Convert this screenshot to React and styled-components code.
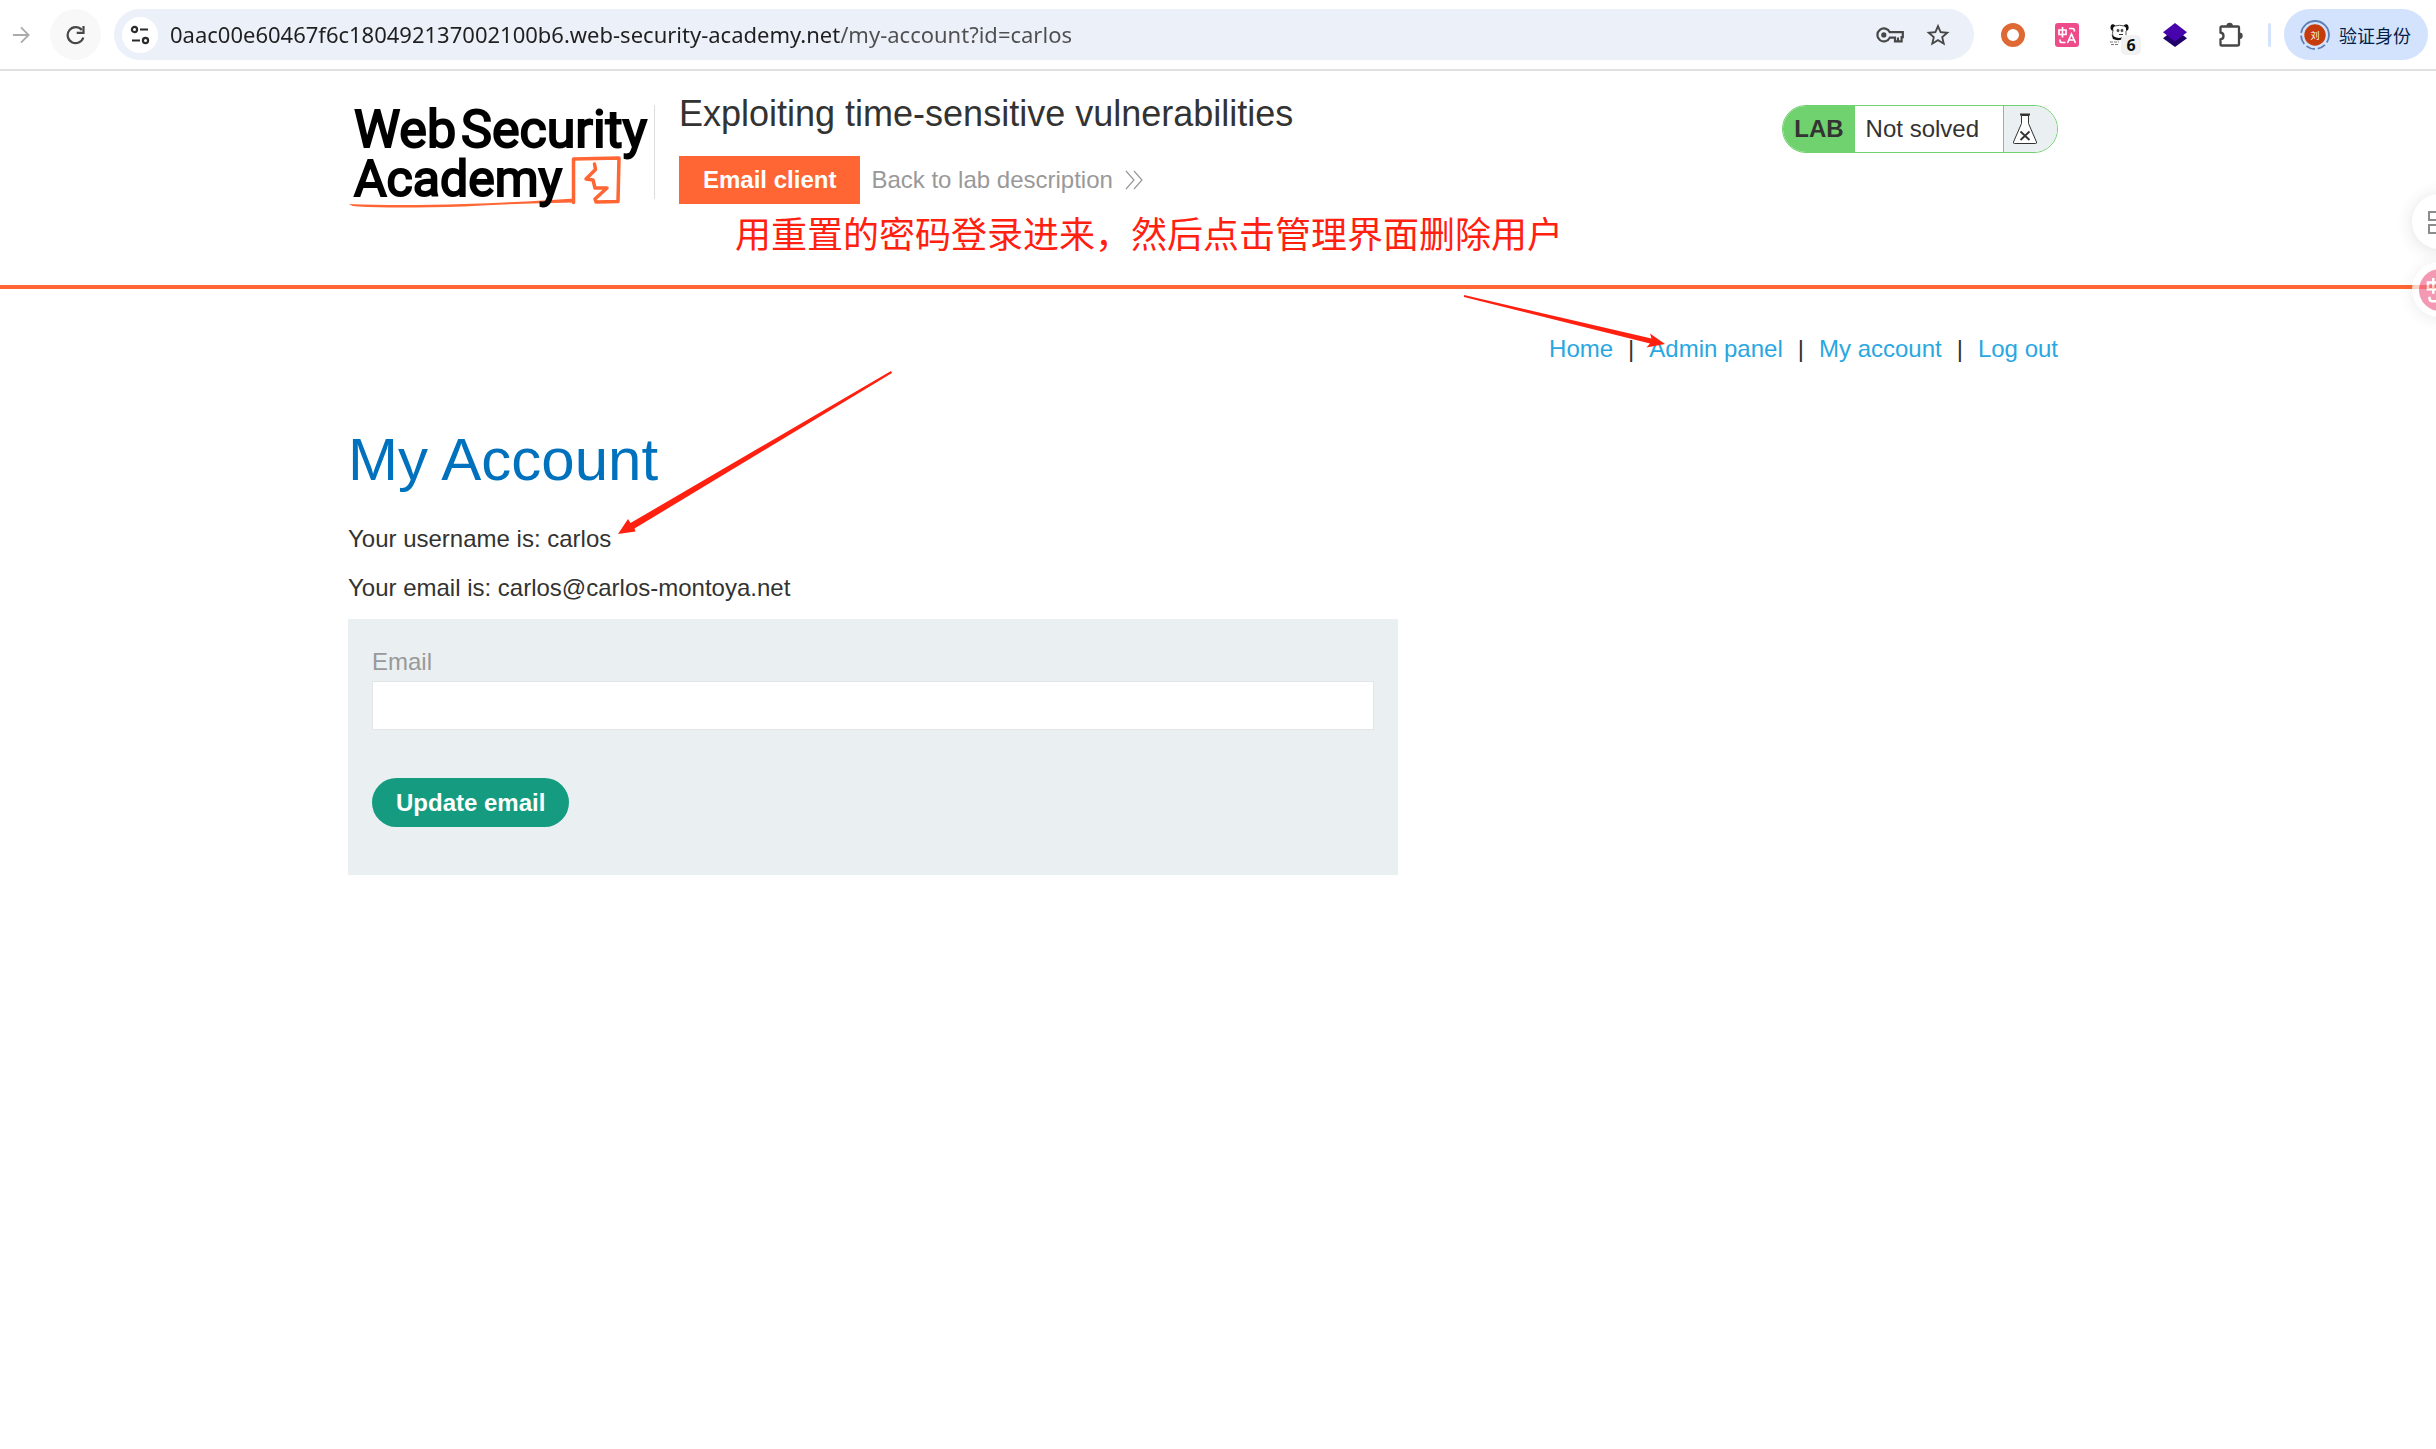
import React from "react";
import styled, { createGlobalStyle } from "styled-components";

const GlobalStyle = createGlobalStyle`
    * {
        box-sizing: border-box;
    }
    body {
        margin: 0;
        background-color: #fff;
        color: #333332;
        font-family: "Liberation Sans", Arial, sans-serif;
        font-size: 24px;
        line-height: 36px;
        overflow-x: hidden;
    }
`;

const Page = styled.div`
    position: relative;
    min-height: 100vh;
    overflow: hidden;
`;

/* ---------- browser toolbar ---------- */

const Toolbar = styled.div`
    display: flex;
    align-items: center;
    padding: 9px 8px 9px 12px;
    border-bottom: 2px solid #e1e1e1;
    background-color: #fff;
`;

const IconButton = styled.button`
    display: flex;
    justify-content: center;
    align-items: center;
    flex-shrink: 0;
    width: ${({ $width }) => $width || 24}px;
    height: ${({ $height }) => $height || 51}px;
    padding: 0;
    border: none;
    border-radius: 50%;
    background-color: ${({ $background }) => $background || "transparent"};
    cursor: pointer;
`;

const AddressBar = styled.form`
    display: flex;
    align-items: center;
    flex: 1;
    gap: 12px;
    height: 51px;
    margin-left: 13px;
    padding: 0 22px 0 8px;
    border-radius: 26px;
    background-color: #ebf0f9;
`;

const AddressInput = styled.input`
    flex: 1;
    min-width: 0;
    height: 34px;
    padding: 0 0 2px;
    border: none;
    outline: none;
    font-family: "Noto Sans", "Open Sans", sans-serif;
    font-size: 22px;
    /* the path is a lighter grey than the host */
    color: transparent;
    background-image: linear-gradient(to right, #1f1f1f 670px, #4f4f4f 670px);
    background-clip: text;
`;

const AddressActions = styled.div`
    display: flex;
    align-items: center;
    gap: 20px;
`;

const Reload = styled(IconButton)`
    margin-left: 20px;
`;

const Extensions = styled.div`
    display: flex;
    margin-left: 12px;
`;

const Extension = styled(IconButton)`
    position: relative;
`;

const Badge = styled.span`
    position: absolute;
    right: 7px;
    bottom: 5px;
    width: 20px;
    height: 20px;
    border-radius: 5px;
    background-color: #f1f1f1;
    color: #111;
    font-family: "Noto Sans", sans-serif;
    font-size: 16px;
    font-weight: 700;
    line-height: 20px;
    text-align: center;
`;

const ToolbarDivider = styled.span`
    width: 3px;
    height: 24px;
    margin: 0 13px 0 12px;
    border-radius: 2px;
    background-color: #d3e3fd;
`;

const Profile = styled.button`
    display: flex;
    align-items: center;
    gap: 9px;
    height: 51px;
    padding: 0 17px 0 16px;
    border: none;
    border-radius: 26px;
    background-color: #d3e3fd;
    color: #041e49;
    font-family: "Noto Sans CJK SC", sans-serif;
    font-size: 18px;
    white-space: nowrap;
    cursor: pointer;
`;

/* ---------- lab header ---------- */

const Header = styled.header`
    padding: 22px 30px 81px 0;
    border-bottom: 4px solid #ff6633;
`;

const Container = styled.div`
    max-width: 1710px;
    margin: 0 auto;
`;

const HeaderRow = styled(Container)`
    display: flex;
    align-items: flex-start;
`;

const Logo = styled.a`
    display: block;
    height: 94px;
    margin-top: 12px;
    margin-right: 24px;
    border-right: 1px solid #dcdcdc;

    svg {
        display: block;
        overflow: visible;
    }
    text {
        font-family: Roboto, sans-serif;
        fill: #000;
        stroke: #000;
        stroke-width: 2px;
    }
`;

const LabInfo = styled.div`
    display: flex;
    flex-direction: column;
    flex: 1;
    gap: 21px;
`;

const LabTitle = styled.h2`
    margin: 0;
    font-size: 36px;
    font-weight: 400;
    line-height: 42px;
`;

const LabLinks = styled.div`
    display: flex;
    align-items: center;
    gap: 11px;
`;

const EmailClient = styled.a`
    padding: 0 24px;
    background-color: #ff6633;
    color: #fff;
    font-weight: 700;
    line-height: 48px;
    text-decoration: none;
`;

const BackLink = styled.a`
    display: flex;
    align-items: center;
    gap: 12px;
    color: #999;
    text-decoration: none;
`;

const LabStatus = styled.div`
    display: flex;
    height: 48px;
    margin-top: 12px;
    border: 1px solid #70d16f;
    border-radius: 24px;
    overflow: hidden;
    line-height: 46px;
`;

const StatusTag = styled.span`
    padding: 0 11px;
    background-color: #70d16f;
    font-weight: 700;
`;

const StatusText = styled.span`
    padding: 0 24px 0 11px;
`;

const StatusIcon = styled.span`
    display: flex;
    align-items: center;
    width: 54px;
    padding-left: 8px;
    border-left: 1px solid #70d16f;
    background-color: #eaeff2;
`;

/* ---------- account page ---------- */

const Main = styled.main`
    padding: 42px 30px 0 0;
`;

const Nav = styled.nav`
    display: flex;
    justify-content: flex-end;
    gap: 15px;
`;

const NavLink = styled.a`
    color: #29a7e1;
    text-decoration: none;
`;

const Title = styled.h1`
    margin: 57px 0 25px;
    color: #0071bd;
    font-size: 60px;
    font-weight: 400;
    line-height: 72px;
`;

const Line = styled.p`
    margin: 0 0 13px;
`;

const EmailForm = styled.form`
    display: flex;
    flex-direction: column;
    align-items: flex-start;
    max-width: 1050px;
    padding: 25px 24px 48px;
    background-color: #eaeff2;
`;

const Label = styled.label`
    margin-bottom: 1px;
    color: #999;
`;

const Input = styled.input`
    width: 100%;
    height: 49px;
    padding: 0 12px;
    border: 1px solid #e3e5e6;
    outline: none;
    background-color: #fff;
    font: inherit;
`;

const UpdateButton = styled.button`
    height: 49px;
    margin-top: 48px;
    padding: 0 24px;
    border: none;
    border-radius: 25px;
    background-color: #159c80;
    color: #fff;
    font: inherit;
    font-weight: 700;
    cursor: pointer;
`;

/* ---------- things lying over the page ---------- */

const Note = styled.p`
    position: absolute;
    top: 205px;
    left: 735px;
    margin: 0;
    color: #ff2010;
    font-family: "Noto Sans CJK SC", sans-serif;
    font-size: 36px;
    line-height: 54px;
    white-space: nowrap;
`;

const Arrow = styled.svg`
    position: absolute;
    top: ${({ $top }) => $top}px;
    left: ${({ $left }) => $left}px;
    fill: #ff2010;
    pointer-events: none;
`;

const Floating = styled.button`
    position: absolute;
    top: ${({ $top }) => $top}px;
    right: -31px;
    display: flex;
    justify-content: center;
    align-items: center;
    width: 55px;
    height: 55px;
    padding: 0;
    border: none;
    border-radius: 50%;
    background-color: #fff;
    box-shadow: 0 2px 18px rgba(0, 0, 0, 0.12);
    opacity: ${({ $opacity }) => $opacity || 1};
    cursor: pointer;
`;

const ForwardIcon = () => (
    <svg width="20" height="20" viewBox="0 0 20 20" fill="none" stroke="#ababab" strokeWidth="2">
        <path d="M1 10h17M10 1.500l8.500 8.500L10 18.500" />
    </svg>
);

const ReloadIcon = () => (
    <svg width="20" height="20" viewBox="0 0 20 20" fill="none" stroke="#474747" strokeWidth="2.200">
        <path d="M17.300 12.500A8 8 0 1 1 15.800 5" />
        <path d="M17.500 1v6.800h-6.800" />
    </svg>
);

const TuneIcon = () => (
    <svg width="20" height="20" viewBox="0 0 20 20" fill="none" stroke="#2b2b2b" strokeWidth="2.200">
        <circle cx="4.500" cy="4.500" r="2.600" />
        <path d="M10 4.500h8M2 15.500h8" />
        <circle cx="15.500" cy="15.500" r="2.600" />
    </svg>
);

const KeyIcon = () => (
    <svg width="28" height="16" viewBox="0 0 28 16" fill="none" stroke="#474747" strokeWidth="2.200">
        <path d="M13.800 5.200A6.500 6.500 0 1 0 13.800 10.600H19v3.800h6.600v-4.200h1.200V5.200z" />
        <path d="M22 14v-3.500" />
        <circle cx="7.800" cy="7.900" r="2.600" fill="#474747" stroke="none" />
    </svg>
);

const StarIcon = () => (
    <svg width="24" height="24" viewBox="0 0 24 24" fill="#474747">
        <path d="M22 9.240l-7.190-.620L12 2 9.190 8.630 2 9.240l5.460 4.730L5.820 21 12 17.270 18.180 21l-1.630-7.030L22 9.240zM12 15.400l-3.760 2.270 1-4.280-3.320-2.880 4.380-.380L12 6.100l1.710 4.040 4.380.380-3.320 2.880 1 4.280L12 15.400z" transform="translate(-1.800 -1.600) scale(1.150)" />
    </svg>
);

const DonutIcon = () => (
    <svg width="24" height="24" viewBox="0 0 24 24">
        <circle cx="12" cy="12" r="9" fill="none" stroke="#df6934" strokeWidth="6" />
    </svg>
);

/* 中 and A with two hooks, drawn with plain strokes */
const TranslateMark = () => (
    <g fill="none" stroke="#fff" strokeWidth="1.700">
        <path d="M4 7h7v4.500H4zM7.500 4v10.500" />
        <path d="M14 5.500h3.500q2 0 2 3" />
        <path d="M5 16.500v1q0 2 2 2h3.500" />
        <path d="M12.500 20l4-9 4 9M14 17h5" />
    </g>
);

const TranslateIcon = () => (
    <svg width="24" height="24" viewBox="0 0 24 24">
        <rect width="24" height="24" rx="3" fill="#ee4b8b" />
        <TranslateMark />
    </svg>
);

const PandaIcon = () => (
    <svg width="24" height="24" viewBox="0 0 24 24">
        <path d="M5.500 3.500Q3 1.500 2.800 4T4.200 6.500M15.500 3.500Q18 1.500 18.300 4T17 6.500" fill="none" stroke="#111" strokeWidth="2.600" />
        <path d="M6 3q4.500-1.500 9 0M4 7q-1 4 0 6M17 8v4" fill="none" stroke="#555" />
        <ellipse cx="9" cy="7.500" rx="1.400" ry="1.800" fill="#555" />
        <ellipse cx="13" cy="7.500" rx="1.400" ry="1.800" fill="#555" />
        <path d="M10 11.500h4" stroke="#333" />
        <path d="M2.500 11.500l2.500 2q4 2.500 9 .5l-1 2.500q-5 1.500-9-.5z" fill="#111" />
        <path d="M1 19h9M2 21.500h7" stroke="#777" strokeDasharray="3 1" />
    </svg>
);

const LayersIcon = () => (
    <svg width="24" height="24" viewBox="0 0 24 24">
        <path d="M12 6l12 9.300L12 24 0 15.300z" fill="#22006c" />
        <path d="M12 0l12 9.300L12 18.400 0 9.300z" fill="#4704ad" />
    </svg>
);

const PuzzleIcon = () => (
    <svg width="30" height="26" viewBox="0 0 30 26">
        <g transform="translate(4 0)">
            <path
                d="M3 4.500h17q1 0 1 1V22q0 1.500-1.500 1.500H3.500q-1 0-1-1v-5q3-.5 3-3.500t-3-3.500V5.500q0-1 1-1z"
                fill="none"
                stroke="#474747"
                strokeWidth="2.300"
            />
            <path d="M8.500 4a3.200 3.200 0 0 1 6.400 0zM21.500 10.500a3.200 3.200 0 0 1 0 6.400z" fill="#474747" />
        </g>
    </svg>
);

const Avatar = () => (
    <svg width="30" height="30" viewBox="0 0 30 30">
        <circle cx="15" cy="15" r="14" fill="none" stroke="#5d7fb3" strokeWidth="1.800" strokeDasharray="8 3 8 3 9 3 9 3 42" />
        <circle cx="15" cy="15" r="10.700" fill="#c63b0b" />
        <text x="15" y="18.500" fontSize="9" fontFamily="Noto Sans CJK SC" fill="#fff" textAnchor="middle">
            刘
        </text>
    </svg>
);

const AcademyLogo = () => (
    <svg width="306" height="94" viewBox="0 0 306 94">
        <path
            d="M225.500 97.500V54l45.500-1-1 43.500-22 .5-1-3 12-11h-12l-2-8-7-1 9.500-9.500-1-5.500"
            fill="none"
            stroke="#ff6633"
            strokeWidth="3.500"
            strokeLinejoin="round"
            strokeLinecap="round"
        />
        <path d="M1 99q50 2 115 0t110-5.500v4q-60 1-110 4-70 2-106 0-6 0-9-2.500z" fill="#ff6633" />
        <text x="6" y="42" fontSize="52">Web</text>
        <text x="113" y="42" fontSize="52">Security</text>
        <text x="6" y="91" fontSize="50">Academy</text>
    </svg>
);

const ChevronsIcon = () => (
    <svg width="18" height="20" viewBox="0 0 18 20" fill="none" stroke="#999" strokeWidth="1.200">
        <path d="M1 1l8 9-8 9M9 1l8 9-8 9" />
    </svg>
);

const FlaskIcon = () => (
    <svg width="26" height="32" viewBox="0 0 26 32" fill="none" stroke="#333332">
        <path d="M9.500 2.500v8L1.500 29q-.500 1.500 1 1.500h21q1.500 0 1-1.500l-8-18.500v-8z" fill="#fff" />
        <path d="M8 1.500h10" strokeWidth="2" />
        <path d="M8.500 18.500l9 8.500M17.500 18.500l-9 8.500" strokeWidth="1.800" />
    </svg>
);

const GridIcon = () => (
    <svg width="24" height="24" viewBox="0 0 24 24" fill="none" stroke="#8c8c8c" strokeWidth="2">
        <path d="M1 2h8v8H1zM14 2h8v8h-8zM1 15h8v8H1zM14 15h8v8h-8z" />
    </svg>
);

const PinkTranslateIcon = () => (
    <svg width="42" height="42" viewBox="0 0 42 42">
        <circle cx="21" cy="21" r="21" fill="#ef6f95" />
        <g transform="translate(3 3) scale(1.500)">
            <TranslateMark />
        </g>
    </svg>
);

const links = ["Home", "Admin panel", "My account", "Log out"];

const BrowserToolbar = () => (
    <Toolbar>
        <IconButton $width={18} aria-label="Forward">
            <ForwardIcon />
        </IconButton>
        <Reload $width={51} $background="#f8f8f8" aria-label="Reload">
            <ReloadIcon />
        </Reload>
        <AddressBar onSubmit={(e) => e.preventDefault()}>
            <IconButton type="button" $width={36} $height={36} $background="#fff" aria-label="Site information">
                <TuneIcon />
            </IconButton>
            <AddressInput
                type="text"
                aria-label="Address"
                defaultValue="0aac00e60467f6c180492137002100b6.web-security-academy.net/my-account?id=carlos"
            />
            <AddressActions>
                <IconButton type="button" $width={28} aria-label="Passwords">
                    <KeyIcon />
                </IconButton>
                <IconButton type="button" $width={28} aria-label="Bookmark">
                    <StarIcon />
                </IconButton>
            </AddressActions>
        </AddressBar>
        <Extensions>
            <Extension $width={54} aria-label="Recorder">
                <DonutIcon />
            </Extension>
            <Extension $width={54} aria-label="Translate">
                <TranslateIcon />
            </Extension>
            <Extension $width={54} aria-label="Panda">
                <PandaIcon />
                <Badge>6</Badge>
            </Extension>
            <Extension $width={54} aria-label="Layers">
                <LayersIcon />
            </Extension>
            <Extension $width={54} aria-label="Extensions">
                <PuzzleIcon />
            </Extension>
        </Extensions>
        <ToolbarDivider />
        <Profile>
            <Avatar />
            验证身份
        </Profile>
    </Toolbar>
);

const LabHeader = () => (
    <Header>
        <HeaderRow>
            <Logo href="#" aria-label="Web Security Academy">
                <AcademyLogo />
            </Logo>
            <LabInfo>
                <LabTitle>Exploiting time-sensitive vulnerabilities</LabTitle>
                <LabLinks>
                    <EmailClient href="#">Email client</EmailClient>
                    <BackLink href="#">
                        Back to lab description
                        <ChevronsIcon />
                    </BackLink>
                </LabLinks>
            </LabInfo>
            <LabStatus>
                <StatusTag>LAB</StatusTag>
                <StatusText>Not solved</StatusText>
                <StatusIcon>
                    <FlaskIcon />
                </StatusIcon>
            </LabStatus>
        </HeaderRow>
    </Header>
);

const Account = () => (
    <Main>
        <Container>
            <Nav>
                {links.map((link, i) => (
                    <React.Fragment key={link}>
                        {i > 0 && <span>|</span>}
                        <NavLink href="#">{link}</NavLink>
                    </React.Fragment>
                ))}
            </Nav>
            <Title>My Account</Title>
            <Line>Your username is: carlos</Line>
            <Line>Your email is: carlos@carlos-montoya.net</Line>
            <EmailForm onSubmit={(e) => e.preventDefault()}>
                <Label htmlFor="email">Email</Label>
                <Input id="email" type="email" name="email" />
                <UpdateButton type="submit">Update email</UpdateButton>
            </EmailForm>
        </Container>
    </Main>
);

const App = () => {
    return (
        <>
            <GlobalStyle />
            <Page>
                <BrowserToolbar />
                <LabHeader />
                <Account />
                <Note>用重置的密码登录进来，然后点击管理界面删除用户</Note>
                <Arrow $top={290} $left={1460} width="210" height="64" viewBox="0 0 210 64">
                    <path d="M4 5L191.500 48.500 190 43.500 205 54 186.500 57.500 190 53.500 4 7z" />
                </Arrow>
                <Arrow $top={366} $left={610} width="290" height="176" viewBox="0 0 290 176">
                    <path d="M282 7L24.500 162.500 25.500 165.500 8 168 18 153 20.500 157 281 5z" />
                </Arrow>
                <Floating $top={194} aria-label="Apps">
                    <GridIcon />
                </Floating>
                <Floating $top={262} $opacity={0.7} aria-label="Translate page">
                    <PinkTranslateIcon />
                </Floating>
            </Page>
        </>
    );
};

export default App;
